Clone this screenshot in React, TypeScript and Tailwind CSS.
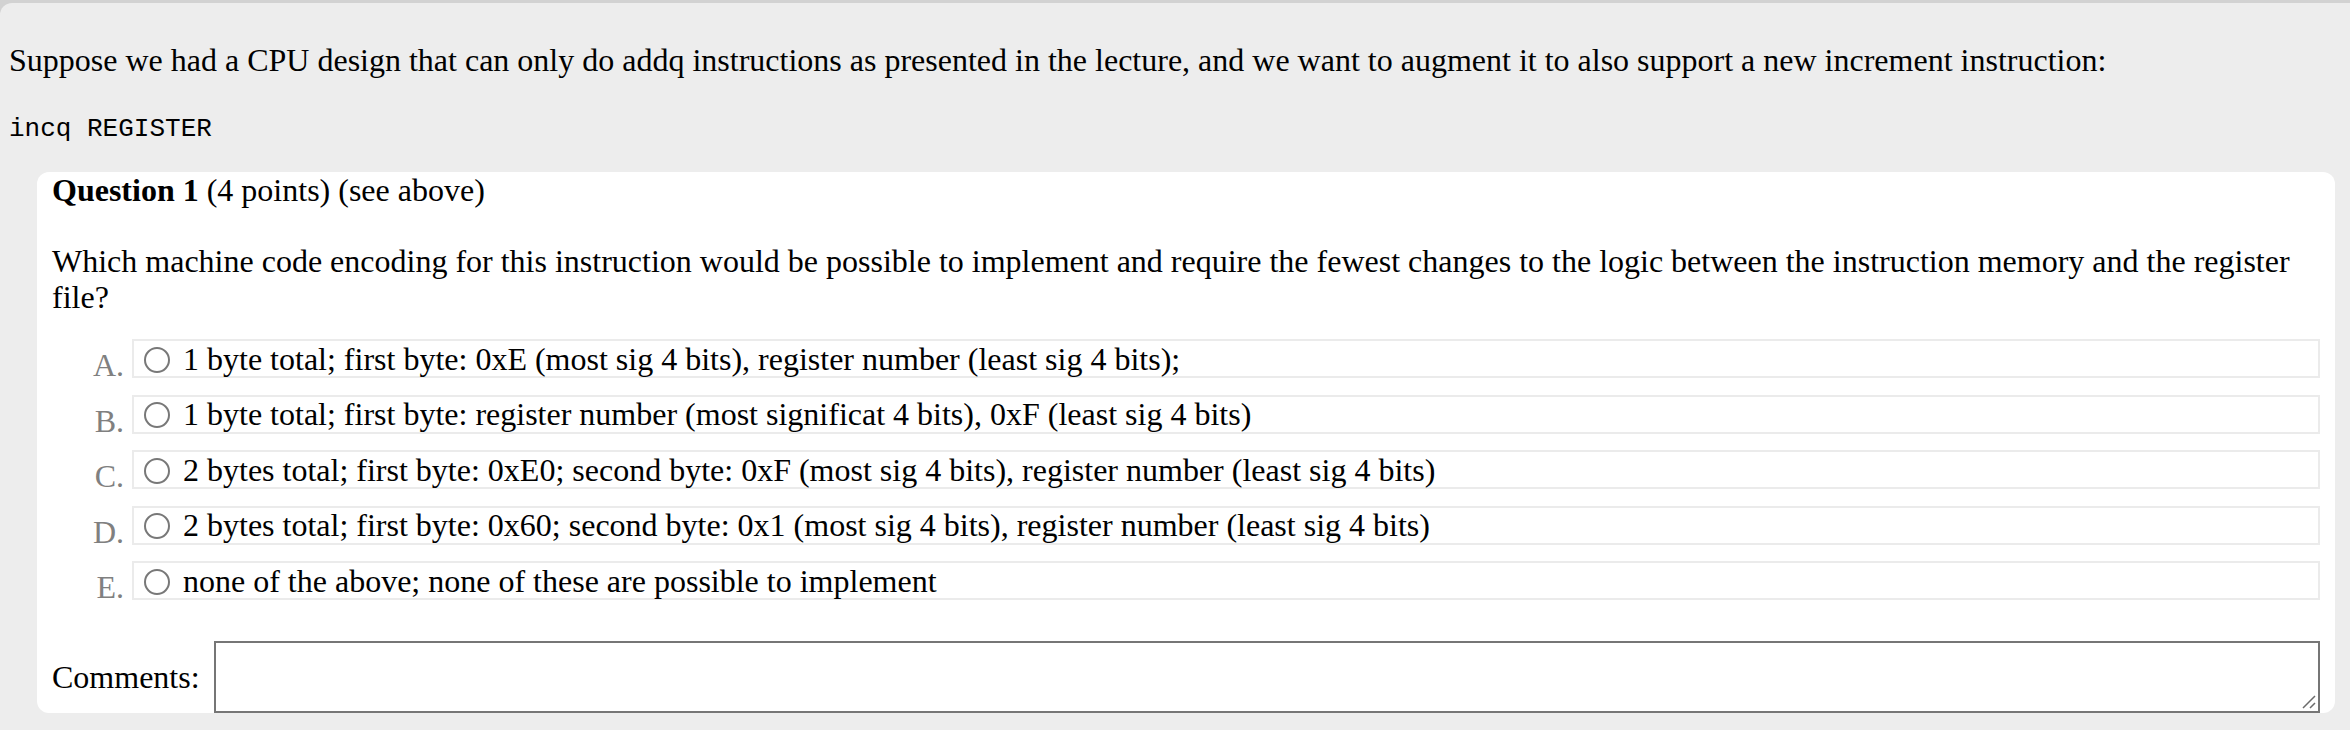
const options = [
  { letter: 'A.', text: '1 byte total; first byte: 0xE (most sig 4 bits), register number (least sig 4 bits);' },
  { letter: 'B.', text: '1 byte total; first byte: register number (most significat 4 bits), 0xF (least sig 4 bits)' },
  { letter: 'C.', text: '2 bytes total; first byte: 0xE0; second byte: 0xF (most sig 4 bits), register number (least sig 4 bits)' },
  { letter: 'D.', text: '2 bytes total; first byte: 0x60; second byte: 0x1 (most sig 4 bits), register number (least sig 4 bits)' },
  { letter: 'E.', text: 'none of the above; none of these are possible to implement' },
]

function Option({ letter, text }: { letter: string; text: string }) {
  return (
    <div className="flex">
      <span className="w-[80px] shrink-0 pr-[8px] text-right text-[#808080] self-end leading-[30px] -mb-[2px]">{letter}</span>
      <label className="flex-1 h-[39px] border-2 border-[#ebebeb] flex items-center">
        <span className="ml-[10px] mt-[2px] w-[26px] h-[26px] rounded-full border-2 border-[#787878] bg-white shrink-0" />
        <span className="ml-[13px] leading-[36px]">{text}</span>
      </label>
    </div>
  )
}

export default function App() {
  return (
    <div className="h-[730px] bg-[#d2d2d2] pt-[3px] font-['Liberation_Serif',serif] text-black text-[32px] overflow-hidden">
      <div className="h-[727px] bg-[#ededed] rounded-tl-[12px] px-[9px] pt-[39px]">
        <p className="leading-[36px]">
          Suppose we had a CPU design that can only do addq instructions as presented in the lecture, and we want to augment it to also support a new increment instruction:
        </p>
        <pre className="mt-[36px] font-['Liberation_Mono',monospace] text-[26px] leading-[30px]">incq REGISTER</pre>
        <div className="mt-[28px] ml-[28px] mr-[6px] bg-white rounded-[12px] px-[15px]">
          <p className="leading-[36px]">
            <b>Question 1</b> (4 points) (see above)
          </p>
          <p className="mt-[35px] leading-[36px]">
            Which machine code encoding for this instruction would be possible to implement and require the fewest changes to the logic between the instruction memory and the register file?
          </p>
          <div className="mt-[24px] flex flex-col gap-[16.5px]">
            {options.map((o) => (
              <Option key={o.letter} letter={o.letter} text={o.text} />
            ))}
          </div>
          <div className="mt-[41px] flex items-center">
            <span className="w-[162px] shrink-0">Comments:</span>
            <div className="relative flex-1 h-[72px] border-2 border-[#767676] bg-white">
              <svg className="absolute right-[2px] bottom-[2px]" width="16" height="16" viewBox="0 0 16 16">
                <path d="M3 15 L15 3 M10 15 L15 10" stroke="#6b6b6b" strokeWidth="1.5" />
              </svg>
            </div>
          </div>
        </div>
      </div>
    </div>
  )
}
